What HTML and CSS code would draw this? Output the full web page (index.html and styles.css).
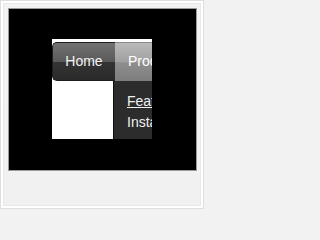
FILE: index.html
```html
<!DOCTYPE html>
<html>
<head>
<meta charset="utf-8">
<link rel="stylesheet" href="styles.css">
</head>
<body>
<div class="page">
  <div class="inner">
    <div class="frame">
      <div class="demo">
        <div class="menubar">
          <div class="item home">Home</div>
          <div class="item products">Products</div>
        </div>
        <div class="submenu">
          <a class="sub link" href="#">Features</a>
          <div class="sub">Installation</div>
        </div>
      </div>
    </div>
  </div>
</div>
</body>
</html>
```
FILE: styles.css
```css
html, body {
  margin: 0;
  padding: 0;
  background: #f2f2f2;
}
.page {
  box-sizing: border-box;
  width: 204px;
  height: 209px;
  border: 1px solid #dedede;
  background: #ffffff;
  padding: 2px;
}
.inner {
  box-sizing: border-box;
  width: 100%;
  height: 100%;
  border: 1px solid #e8e8e8;
  background: linear-gradient(#f3f3f3, #f1f1f1);
  padding: 4px;
}
.frame {
  box-sizing: border-box;
  width: 189px;
  height: 163px;
  background: #000;
  border: 1px solid #9a9a9a;
  padding: 30px 0 0 43px;
}
.demo {
  position: relative;
  width: 100px;
  height: 100px;
  background: #fff;
  overflow: hidden;
  font-family: "Liberation Sans", Arial, sans-serif;
  font-size: 14px;
}
.menubar {
  display: flex;
  margin-top: 3px;
  height: 39px;
  white-space: nowrap;
}
.item {
  box-sizing: border-box;
  height: 39px;
  line-height: 37px;
  color: #f2f2f2;
}
.home {
  flex: none;
  width: 63px;
  text-align: center;
  border: 1px solid #1e1e1e;
  border-right: none;
  border-radius: 5px 0 0 5px;
  background: linear-gradient(#727272 0%, #5a5a5a 50%, #343434 52%, #2a2a2a 100%);
}
.products {
  flex: none;
  padding-left: 13px;
  padding-right: 13px;
  border-top: 1px solid #8a8a8a;
  color: #fff;
  background: linear-gradient(#b9b9b9 0%, #a0a0a0 50%, #8e8e8e 52%, #7e7e7e 100%);
}
.submenu {
  position: absolute;
  left: 61px;
  top: 42px;
  width: 120px;
  height: 70px;
  box-sizing: border-box;
  background: #2c2c2c;
  border-left: 1px solid #0e0e0e;
  padding: 10px 0 0 13px;
  white-space: nowrap;
}
.sub {
  display: block;
  line-height: 21px;
  color: #f0f0f0;
  text-decoration: none;
}
.sub.link {
  text-decoration: underline;
}
```
